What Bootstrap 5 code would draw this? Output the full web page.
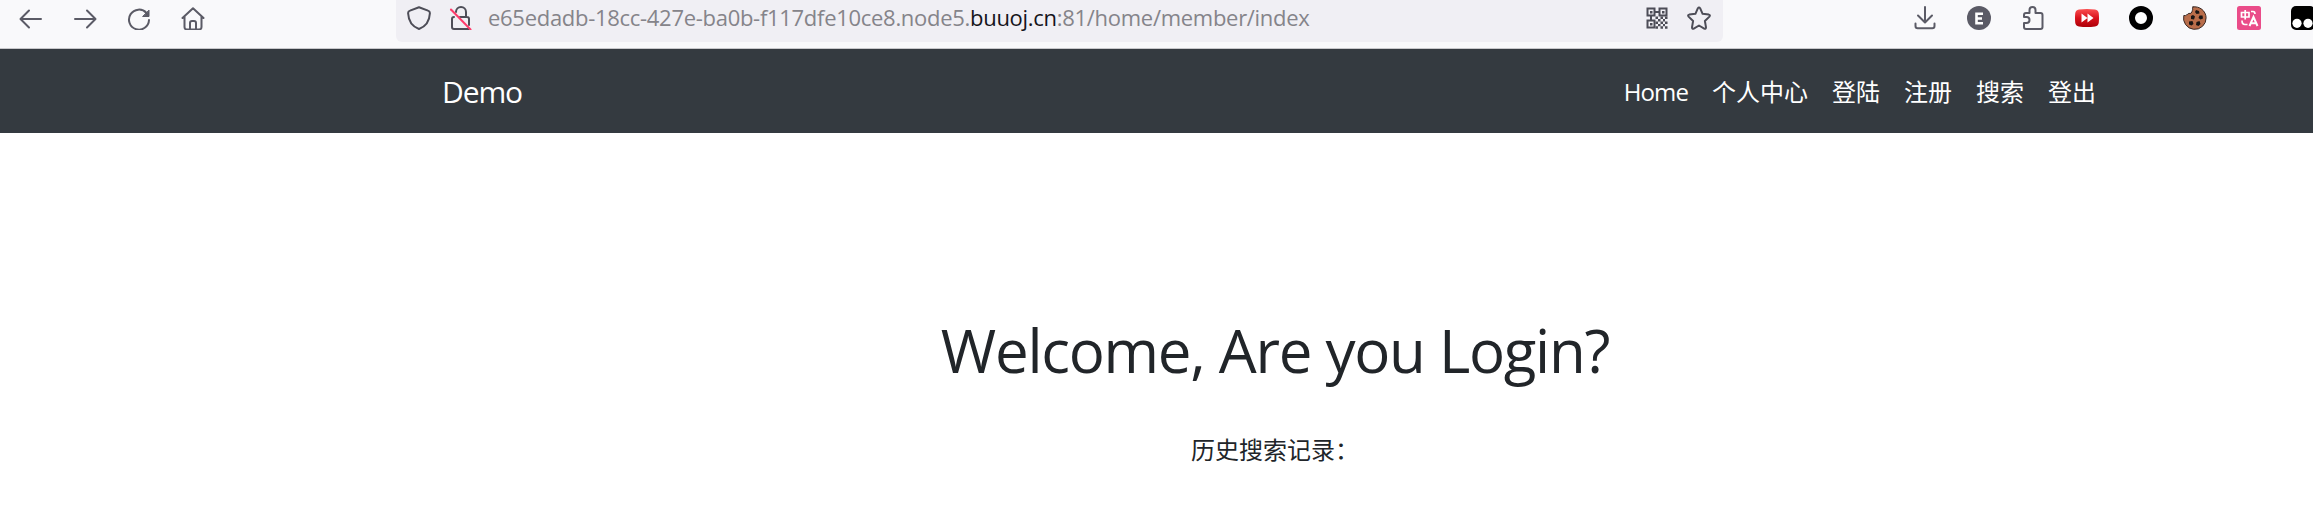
<!DOCTYPE html>
<html lang="zh-CN">
<head>
<meta charset="utf-8">
<title>Demo</title>
<link href="https://cdn.jsdelivr.net/npm/bootstrap@5.3.0/dist/css/bootstrap.min.css" rel="stylesheet">
<style>
body{font-family:"Open Sans","Noto Sans CJK SC",sans-serif;color:#212529;background:#fff;overflow:hidden;font-size:24px;line-height:36px}
.toolbar{height:49px;background:#f9f9fb;border-bottom:1px solid #c8c8cb;padding-left:4px;overflow:hidden}
.tool{width:54px;height:36px;flex:none;color:#5b5b66}
.tool svg,.address svg{width:24px;height:24px;flex:none;display:block}
svg{fill:none;stroke:currentColor;stroke-width:2;stroke-linecap:round;stroke-linejoin:round}
.address{width:1327px;height:42px;margin-left:176px;background:#f0eff4;border-radius:0 0 6px 6px;padding:0 12px 6px 11px;color:#4d4d57;flex:none}
.lock{margin-left:18px}
.url{font-size:22px;line-height:36px;color:#85848a;margin:-2px 0 0 15px;letter-spacing:-.29px;white-space:nowrap}
.url b{font-weight:400;color:#15141a}
.extensions{margin-left:174.5px}
.site-nav{height:84px;background:#343a40;padding:0 205px 0 442px}
.site-nav .navbar-brand{font-size:30px;line-height:45px;color:#fff;padding:0;margin:0;letter-spacing:-1.1px}
.site-nav .navbar-nav .nav-link{color:#fff;padding:2px 12px 0;white-space:nowrap;line-height:36px}
.site-nav .navbar-nav .latin{letter-spacing:-.9px}
.welcome{padding-top:181px;padding-left:237px}
.welcome h1{font-size:60px;line-height:72px;font-weight:400;margin:0;letter-spacing:-1.27px;white-space:nowrap}
.history{margin:46px 0 0;white-space:nowrap}
</style>
</head>
<body>
<header class="toolbar d-flex align-items-start">
  <div class="tool d-flex align-items-center justify-content-center"><svg viewBox="0 0 24 24"><path d="M22 13H2M10 4.500L1.500 13l8.500 8.500"/></svg></div>
  <div class="tool d-flex align-items-center justify-content-center"><svg viewBox="0 0 24 24"><path d="M2 13h20M14 4.500l8.500 8.500-8.500 8.500"/></svg></div>
  <div class="tool d-flex align-items-center justify-content-center"><svg viewBox="0 0 24 24"><path d="M19.500 7A10 10 0 1 0 22 14"/><path d="M22 4.500v6h-6z" fill="currentColor" stroke-width="1"/></svg></div>
  <div class="tool d-flex align-items-center justify-content-center"><svg viewBox="0 0 24 24"><path d="M1.500 12L12 2.200 22.500 12M3.500 10.500V21q0 2.500 2.500 2.500h12q2.500 0 2.500-2.500V10.500M9 23v-6q0-2 2-2h2q2 0 2 2v6"/></svg></div>
  <div class="address d-flex align-items-center">
    <svg viewBox="0 0 24 24"><path d="M12 1.200L21 4.600q2 .7 1.900 2.700C22.500 15 19 20.500 12 23 5 20.500 1.500 15 1.100 7.300Q1 5.300 3 4.600z"/></svg>
    <svg class="lock" viewBox="0 0 24 24"><path d="M7 6a5 5 0 0 1 10 0v5M5 11Q3 11 3 13v8q0 2 2 2h15M11 11h7q2 0 2 2v6"/><path d="M2 3.500l19.500 20" stroke="#ff3b6b"/></svg>
    <div class="url">e65edadb-18cc-427e-ba0b-f117dfe10ce8.node5.<b>buuoj.cn</b>:81/home/member/index</div>
    <div class="d-flex ms-auto" style="gap:18px">
      <svg viewBox="0 0 24 24"><path d="M2.500 2.500h7v7h-7zM14.500 2.500h7v7h-7zM2.500 14.500h7v7h-7zM10 6h4M6 10v4" stroke-linecap="butt" stroke-linejoin="miter"/><path fill="currentColor" stroke="none" d="M5 5h2.500v2.500H5zM17 5h2.500v2.500H17zM5 17h2.500v2.500H5zM10.500 10.500H13V13h-2.500zM15.500 10.500H18V13h-2.500zM20 10.500h2.500V13H20zM13 13h2.500v2.500H13zM18 13h2v2.500h-2zM10.500 15.500H13V18h-2.500zM15.500 15.500H18V18h-2.500zM20 15.500h2.500V18H20zM13 18h2.500v2.200H13zM18 18h2v2.200h-2zM10.500 20.200H13v2.500h-2.500zM15.500 20.200H18v2.500h-2.500zM20 20.200h2.500v2.500H20z"/></svg>
      <svg viewBox="0 0 24 24"><path d="M10.900 2.200q1.100-1.600 2.200 0l2.500 5.600 6.200.8q1.800.5.600 2l-4.500 4.400 1.100 6.300q0 1.900-1.800 1.300L12 19.500l-5.200 3.100q-1.800.6-1.800-1.300L6.100 15l-4.500-4.400q-1.200-1.500.6-2l6.200-.8z"/></svg>
    </div>
  </div>
  <div class="extensions d-flex">
    <div class="tool d-flex align-items-center justify-content-center"><svg viewBox="0 0 24 24"><path d="M12 1v15M5 9.500l7 7 7-7M2.500 17.500V20q0 2.200 2.200 2.200h14.600q2.200 0 2.200-2.200v-2.500"/></svg></div>
    <div class="tool d-flex align-items-center justify-content-center"><svg viewBox="0 0 24 24"><circle cx="12" cy="12" r="12" fill="#5b5b66" stroke="none"/><path d="M16 7.800H9.500v9.400H16M9.500 12.500h5.500" stroke="#fff" stroke-width="2.600" stroke-linecap="butt" stroke-linejoin="miter"/></svg></div>
    <div class="tool d-flex align-items-center justify-content-center"><svg viewBox="0 0 24 24"><path d="M8.500 7V4a3 3 0 0 1 6 0v3h5q2 0 2 2v12q0 2-2 2H5q-2 0-2-2v-4h2.500a3 3 0 0 0 0-6H3V9q0-2 2-2z"/></svg></div>
    <div class="tool d-flex align-items-center justify-content-center"><svg viewBox="0 0 24 24"><defs><linearGradient id="red" x2="0" y2="1"><stop stop-color="#fb5051"/><stop offset=".5" stop-color="#d9121c"/><stop offset="1" stop-color="#ad0008"/></linearGradient></defs><path fill="url(#red)" stroke="none" d="M4 3.500q8-1.200 16 0 3.500.4 3.800 4 .4 4.500 0 9-.3 3.600-3.800 4-8 1.200-16 0-3.500-.4-3.800-4-.4-4.500 0-9Q.5 3.900 4 3.500z"/><path fill="#fff" stroke="none" d="M6.500 7.500l6 4.500-6 4.500zM12.500 7.500l6 4.500-6 4.500z"/></svg></div>
    <div class="tool d-flex align-items-center justify-content-center"><svg viewBox="0 0 24 24"><circle cx="12" cy="12" r="9" fill="#fff" stroke="#000" stroke-width="6"/></svg></div>
    <div class="tool d-flex align-items-center justify-content-center"><svg viewBox="0 0 24 24"><path fill="#b96d4a" stroke="#3b2a25" stroke-width="1" d="M10 .9A11.300 11.300 0 1 1 .8 9.500q2.200.5 3-.8 1.200.2 1.500-1.200 3.200.5 3.700-1.700-.4-1.300.8-1.900-.8-1.600.2-3z"/><path fill="#191514" stroke="none" d="M13 4l3 1 .5 2.500-3 .5-1.500-2zM8 10l2-1 2 1.500-1 3-3-.5zM16.500 9.500l3 0 .5 3-2.500 1-2-1.500zM6 15.500l3.500-.5 1 3-2 1.500-2.500-1zM13.500 16l3-1 1 3-2 2-2.500-1z"/></svg></div>
    <div class="tool d-flex align-items-center justify-content-center"><svg viewBox="0 0 24 24"><rect width="24" height="24" rx="2.500" fill="#ea4c89" stroke="none"/><path stroke="#fff" stroke-width="1.700" stroke-linecap="butt" stroke-linejoin="miter" d="M4.500 6.500h7.500v4.500H4.500zM8.200 4v9.500M14 5.500h2q2 0 2 2.500M5 14.500q0 4 3 4h2.500"/><path stroke="#fff" stroke-width="2" stroke-linecap="butt" stroke-linejoin="miter" d="M12.500 20L16.500 11l4 9M14 17.200h5"/></svg></div>
    <div class="tool d-flex align-items-center justify-content-center"><svg viewBox="0 0 24 24"><rect width="24" height="24" rx="5" fill="#000" stroke="none"/><circle cx="6" cy="17.300" r="4.600" fill="#fff" stroke="none"/><circle cx="17" cy="17.300" r="4.600" fill="#fff" stroke="none"/></svg></div>
  </div>
</header>
<nav class="navbar navbar-expand navbar-dark site-nav d-flex align-items-center justify-content-between">
  <a class="navbar-brand" href="#">Demo</a>
  <ul class="navbar-nav">
    <li class="nav-item"><a class="nav-link latin" href="#">Home</a></li>
    <li class="nav-item"><a class="nav-link" href="#">个人中心</a></li>
    <li class="nav-item"><a class="nav-link" href="#">登陆</a></li>
    <li class="nav-item"><a class="nav-link" href="#">注册</a></li>
    <li class="nav-item"><a class="nav-link" href="#">搜索</a></li>
    <li class="nav-item"><a class="nav-link" href="#">登出</a></li>
  </ul>
</nav>
<main class="welcome text-center">
  <h1>Welcome, Are you Login?</h1>
  <p class="history">历史搜索记录：</p>
</main>
<script src="https://cdn.jsdelivr.net/npm/bootstrap@5.3.0/dist/js/bootstrap.bundle.min.js"></script>
</body>
</html>
